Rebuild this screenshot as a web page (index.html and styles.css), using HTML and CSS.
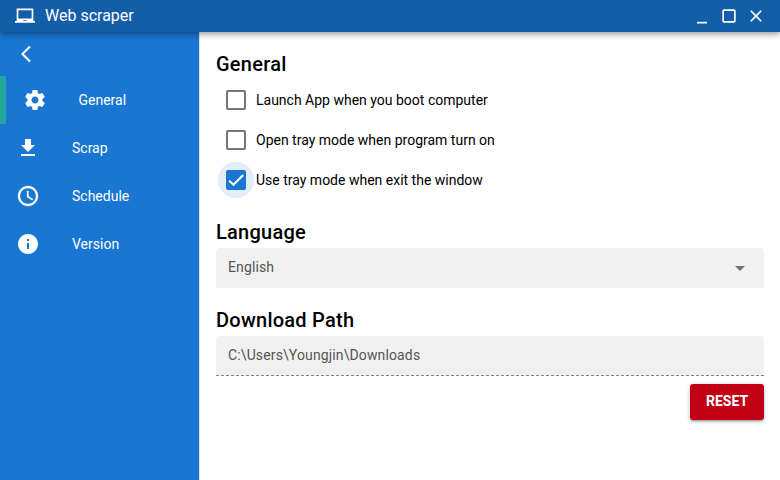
FILE: index.html
```html
<!DOCTYPE html>
<html lang="en">
<head>
<meta charset="utf-8">
<title>Web scraper</title>
<link rel="stylesheet" href="styles.css">
</head>
<body>
<header class="bar">
  <svg class="bar-icon" viewBox="0 0 24 24"><path d="M22 18V3H2v15H0v2h24v-2h-2zm-8 0h-4v-1h4v1zm6-3H4V5h16v10z"/></svg>
  <span class="bar-title">Web scraper</span>
  <svg class="bar-icon" viewBox="0 0 24 24"><path d="M6 19h12v2H6z"/></svg>
  <svg class="bar-icon" viewBox="0 0 24 24"><path d="M18 4H6c-1.1 0-2 .9-2 2v12c0 1.1.9 2 2 2h12c1.1 0 2-.9 2-2V6c0-1.1-.9-2-2-2zm0 14H6V6h12v12z"/></svg>
  <svg class="bar-icon" viewBox="0 0 24 24"><path d="M19 6.41L17.59 5 12 10.59 6.41 5 5 6.41 10.59 12 5 17.59 6.41 19 12 13.41 17.59 19 19 17.59 13.41 12z"/></svg>
</header>
<div class="layout">
  <nav class="drawer">
    <div class="back"><svg viewBox="0 0 24 24"><path d="M11.67 3.87L9.9 2.1 0 12l9.9 9.9 1.77-1.77L3.54 12z"/></svg></div>
    <a class="item active"><svg viewBox="0 0 24 24"><path d="M19.43 12.98c.04-.32.07-.64.07-.98s-.03-.66-.07-.98l2.11-1.65c.19-.15.24-.42.12-.64l-2-3.46c-.12-.22-.39-.3-.61-.22l-2.49 1c-.52-.4-1.08-.73-1.69-.98l-.38-2.65C14.46 2.18 14.25 2 14 2h-4c-.25 0-.46.18-.49.42l-.38 2.65c-.61.25-1.17.59-1.69.98l-2.49-1c-.23-.09-.49 0-.61.22l-2 3.46c-.13.22-.07.49.12.64l2.11 1.65c-.04.32-.07.65-.07.98s.03.66.07.98l-2.11 1.65c-.19.15-.24.42-.12.64l2 3.46c.12.22.39.3.61.22l2.49-1c.52.4 1.08.73 1.69.98l.38 2.65c.03.24.24.42.49.42h4c.25 0 .46-.18.49-.42l.38-2.65c.61-.25 1.17-.59 1.69-.98l2.49 1c.23.09.49 0 .61-.22l2-3.46c.12-.22.07-.49-.12-.64l-2.11-1.65zM12 15.5c-1.93 0-3.500-1.570-3.500-3.500s1.570-3.500 3.500-3.500 3.500 1.570 3.500 3.500-1.570 3.500-3.500 3.500z"/></svg><span>General</span></a>
    <a class="item"><svg viewBox="0 0 24 24"><path d="M19 9h-4V3H9v6H5l7 7 7-7zM5 18v2h14v-2H5z"/></svg><span>Scrap</span></a>
    <a class="item"><svg class="bold" viewBox="0 0 24 24"><path d="M11.99 2C6.47 2 2 6.48 2 12s4.47 10 9.99 10C17.52 22 22 17.52 22 12S17.52 2 11.99 2zM12 20c-4.42 0-8-3.58-8-8s3.58-8 8-8 8 3.58 8 8-3.58 8-8 8zm.5-13H11v6l5.25 3.15.75-1.23-4.5-2.67z"/></svg><span>Schedule</span></a>
    <a class="item"><svg viewBox="0 0 24 24"><path d="M12 2C6.48 2 2 6.48 2 12s4.48 10 10 10 10-4.480 10-10S17.520 2 12 2zm1 15h-2v-6h2v6zm0-8h-2V7h2v2z"/></svg><span>Version</span></a>
  </nav>
  <main class="page">
    <h2>General</h2>
    <div class="check"><span class="halo"><span class="box"></span></span><span>Launch App when you boot computer</span></div>
    <div class="check"><span class="halo"><span class="box"></span></span><span>Open tray mode when program turn on</span></div>
    <div class="check checked"><span class="halo"><span class="box"><svg viewBox="0 0 24 24"><path d="M1.73 12.91 8.1 19.28 22.79 4.59"/></svg></span></span><span>Use tray mode when exit the window</span></div>
    <h2 class="spaced">Language</h2>
    <div class="field"><span>English</span><svg viewBox="0 0 24 24"><path d="M7 10l5 5 5-5z"/></svg></div>
    <h2 class="spaced">Download Path</h2>
    <div class="field readonly"><span>C:\Users\Youngjin\Downloads</span></div>
    <button class="reset">RESET</button>
  </main>
</div>
</body>
</html>
```
FILE: styles.css
```css
* { box-sizing: border-box; }
body {
  margin: 0;
  height: 480px;
  display: flex;
  flex-direction: column;
  overflow: hidden;
  background: #fff;
  color: #000;
  font: 14px/20px Roboto, sans-serif;
}
svg { display: block; flex: none; fill: currentColor; }
.bar {
  position: relative;
  z-index: 1;
  flex: none;
  height: 32px;
  display: flex;
  align-items: center;
  gap: 7px;
  padding: 0 14.5px 1px 15px;
  background: #145ea8;
  color: #fff;
  box-shadow: 0 2px 4px -1px rgba(0,0,0,.2), 0 4px 5px rgba(0,0,0,.14), 0 1px 10px rgba(0,0,0,.12);
}
.bar-icon { width: 20px; height: 20px; }
.bar-title { flex: 1; margin-left: 3px; font-size: 16px; }
.layout { flex: 1; display: flex; }
.drawer { width: 200px; background: #1976d2; color: #fff; border-right: 1px solid #e0e0e0; }
.back { height: 44px; padding: 12px 0 0 21px; }
.back svg { width: 20px; height: 20px; }
.item { display: flex; align-items: center; height: 48px; padding-left: 16px; gap: 32px; }
.item svg { width: 24px; height: 24px; }
.item .bold { stroke: currentColor; stroke-width: .3; }
.active { border-left: 6px solid #26a69a; padding-left: 16.5px; }
.page { flex: 1; display: flex; flex-direction: column; padding: 16px 16px 0; }
h2 { margin: 0; font-size: 20px; line-height: 32px; font-weight: 500; letter-spacing: .25px; }
.spaced { margin-top: 16px; }
.check { height: 40px; display: flex; align-items: center; }
.halo { width: 36px; height: 36px; margin: 0 2px; border-radius: 50%; display: flex; align-items: center; justify-content: center; }
.box { width: 20px; height: 20px; border: 2px solid #757575; border-radius: 2px; }
.checked .halo { background: #e3eefa; }
.checked .box { background: #1976d2; border-color: #1976d2; }
.box svg { width: 16px; height: 16px; fill: none; stroke: #fff; stroke-width: 3.1; }
.field {
  height: 40px;
  display: flex;
  align-items: center;
  justify-content: space-between;
  padding: 0 12px 2px;
  background: #f1f1f1;
  border-radius: 4px 4px 0 0;
  color: #555;
  letter-spacing: .13px;
}
.field svg { width: 24px; height: 24px; color: #707070; position: relative; top: 1px; }
.readonly { border-bottom: 1px dashed #858585; padding-bottom: 1px; }
.reset {
  align-self: flex-end;
  width: 74px;
  height: 36px;
  margin-top: 8px;
  padding: 0 0 2px;
  border: 0;
  border-radius: 3px;
  background: #c10015;
  color: #fff;
  font: 700 14px/24px Roboto, sans-serif;
  box-shadow: 0 1px 5px rgba(0,0,0,.2), 0 2px 2px rgba(0,0,0,.14), 0 3px 1px -2px rgba(0,0,0,.12);
}
```
